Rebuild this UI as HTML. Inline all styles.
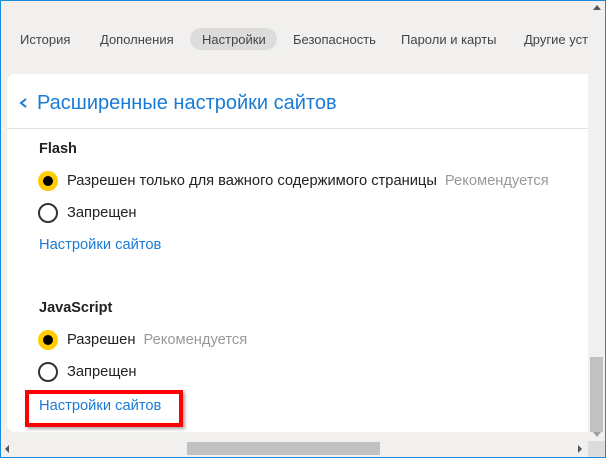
<!DOCTYPE html>
<html><head><meta charset="utf-8"><style>
*{margin:0;padding:0;box-sizing:border-box}
body{width:606px;height:458px;overflow:hidden;background:#f1f0ef;font-family:"Segoe UI","Liberation Sans","DejaVu Sans",sans-serif;position:relative;color:#222}
.frame{position:absolute;inset:0;border:1px solid #1b8ad8;pointer-events:none;z-index:10}
.tab{position:absolute;top:31px;font-size:13px;color:#444;line-height:18px}
.pill{position:absolute;left:190px;top:28px;width:87px;height:22px;border-radius:11px;background:#dddcdb}
.card{position:absolute;left:7px;top:74px;width:581px;height:358px;background:#fff;border-radius:8px 0 0 8px}
.hdr{position:absolute;left:7px;top:128px;width:581px;height:1px;background:#e2e2e2}
.title{position:absolute;left:37px;top:92px;font-size:20px;color:#1a7bd6}
.chev{position:absolute;left:18px;top:96px}
.h{position:absolute;left:39px;font-size:14.5px;font-weight:bold;color:#222}
.t{position:absolute;left:67px;font-size:14.7px;color:#222}
.g{color:#999;margin-left:8px}
.r{position:absolute;left:38px;width:20px;height:20px;border-radius:50%}
.on{background:#ffcc00}
.on::after{content:"";position:absolute;left:5px;top:5px;width:10px;height:10px;border-radius:50%;background:#000}
.off{border:2px solid #333}
.l{position:absolute;left:39px;font-size:14.7px;color:#1a7bd6}
.red{position:absolute;left:25px;top:390px;width:158px;height:37px;border:4px solid #f00;box-shadow:2px 2px 3px rgba(0,0,0,.35)}
</style></head><body>
<div class="pill"></div>
<div class="tab" style="left:20px">История</div>
<div class="tab" style="left:100px">Дополнения</div>
<div class="tab" style="left:202px">Настройки</div>
<div class="tab" style="left:293px">Безопасность</div>
<div class="tab" style="left:401px">Пароли и карты</div>
<div class="tab" style="left:524px;white-space:nowrap;width:64px;overflow:hidden">Другие устройства</div>
<div class="card"></div>
<div class="hdr"></div>
<svg class="chev" width="12" height="14"><path d="M8 3 L3 7 L8 11" stroke="#1a7bd6" stroke-width="2" fill="none"/></svg>
<div class="title">Расширенные настройки сайтов</div>
<div class="h" style="top:141px">Flash</div>
<div class="r on" style="top:171px"></div>
<div class="t" style="top:173px">Разрешен только для важного содержимого страницы<span class="g">Рекомендуется</span></div>
<div class="r off" style="top:203px"></div>
<div class="t" style="top:205px">Запрещен</div>
<div class="l" style="top:237px">Настройки сайтов</div>
<div class="h" style="top:300px">JavaScript</div>
<div class="r on" style="top:330px"></div>
<div class="t" style="top:332px">Разрешен<span class="g">Рекомендуется</span></div>
<div class="r off" style="top:362px"></div>
<div class="t" style="top:364px">Запрещен</div>
<div class="l" style="top:398px">Настройки сайтов</div>
<div class="red"></div>
<div style="position:absolute;left:590px;top:357px;width:13px;height:75px;background:#c1c1c1"></div>
<svg style="position:absolute;left:591px;top:2px" width="12" height="10"><path d="M2 8 L6 3 L10 8Z" fill="#555"/></svg>
<svg style="position:absolute;left:591px;top:429px" width="12" height="10"><path d="M2 3 L6 8 L10 3Z" fill="#a0a0a0"/></svg>
<div style="position:absolute;left:187px;top:442px;width:193px;height:13px;background:#c1c1c1"></div>
<svg style="position:absolute;left:2px;top:443px" width="10" height="12"><path d="M7 2 L3 6 L7 10Z" fill="#555"/></svg>
<svg style="position:absolute;left:575px;top:443px" width="10" height="12"><path d="M3 2 L7 6 L3 10Z" fill="#555"/></svg>
<div style="position:absolute;left:588px;top:441px;width:17px;height:16px;background:#dcdcdc"></div>
<div class="frame"></div>
</body></html>
